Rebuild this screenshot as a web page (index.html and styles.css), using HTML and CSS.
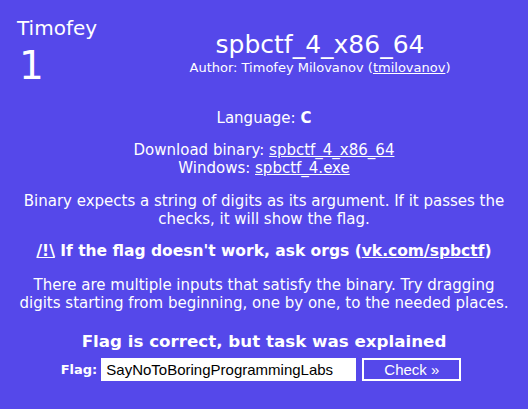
FILE: index.html
```html
<!DOCTYPE html>
<html>
<head>
<meta charset="utf-8">
<link rel="stylesheet" href="styles.css">
</head>
<body>
<div class="page">
  <header class="header">
    <div class="user">
      <div class="user-name">Timofey</div>
      <div class="user-score">1</div>
    </div>
    <div class="task-head">
      <div class="task-title">spbctf_4_x86_64</div>
      <div class="task-author">Author: Timofey Milovanov (<a href="#">tmilovanov</a>)</div>
    </div>
  </header>
  <main class="task-body">
    <p class="lang">Language: <b>C</b></p>
    <p class="downloads">Download binary: <a href="#">spbctf_4_x86_64</a><br>Windows: <a href="#">spbctf_4.exe</a></p>
    <p class="desc">Binary expects a string of digits as its argument. If it passes the checks, it will show the flag.</p>
    <p class="warn"><a href="#">/!\</a> If the flag doesn't work, ask orgs (<a href="#">vk.com/spbctf</a>)</p>
    <p class="hint">There are multiple inputs that satisfy the binary. Try dragging digits starting from beginning, one by one, to the needed places.</p>
    <p class="status">Flag is correct, but task was explained</p>
    <form class="flag-form">
      <label class="flag-label">Flag:</label>
      <input class="flag-input" type="text" value="SayNoToBoringProgrammingLabs">
      <button class="flag-btn" type="button">Check »</button>
    </form>
  </main>
</div>
</body>
</html>
```

FILE: styles.css
```css
html, body {
  margin: 0;
  padding: 0;
  background: #5548ea;
}
body {
  color: #ffffff;
  font-family: "DejaVu Sans", Verdana, sans-serif;
  font-size: 15px;
  width: 528px;
  height: 409px;
  overflow: hidden;
}
a {
  color: #ffffff;
  text-decoration: underline;
}
.header {
  display: flex;
  padding-top: 16px;
}
.user {
  width: 112px;
  padding-left: 17px;
  box-sizing: border-box;
}
.user-name {
  font-size: 20px;
  line-height: 24px;
}
.user-score {
  font-size: 39px;
  line-height: 46px;
  padding-left: 2px;
  margin-top: 3px;
}
.task-head {
  flex: 1;
  text-align: center;
  padding-top: 14px;
}
.task-title {
  font-size: 25px;
  line-height: 30px;
}
.task-author {
  font-size: 13px;
  line-height: 16px;
}
.task-body {
  text-align: center;
  padding: 0 14px;
}
.task-body p {
  margin: 0;
  line-height: 18px;
}
.lang {
  padding-top: 20px;
}
.downloads {
  margin-top: 14px !important;
}
.desc {
  margin-top: 15px !important;
}
.warn {
  font-weight: bold;
  font-size: 15.5px;
  margin-top: 14px !important;
}
.hint {
  margin-top: 16px !important;
}
.status {
  font-weight: bold;
  font-size: 16.7px;
  line-height: 20px !important;
  margin-top: 19px !important;
}
.flag-form {
  display: flex;
  justify-content: center;
  align-items: center;
  margin-top: 7px;
  padding-right: 6px;
}
.flag-label {
  font-weight: bold;
  font-size: 13px;
  margin-right: 4px;
}
.flag-input {
  width: 255px;
  height: 23px;
  box-sizing: border-box;
  border: none;
  background: #ffffff;
  padding: 0 5px;
  font-family: "Liberation Sans", Arial, sans-serif;
  font-size: 15px;
  color: #000000;
  margin: 0;
}
.flag-btn {
  width: 99px;
  height: 23px;
  box-sizing: border-box;
  border: 2px solid #ffffff;
  background: transparent;
  color: #ffffff;
  font-family: "Liberation Sans", Arial, sans-serif;
  font-size: 15px;
  padding: 0;
  margin: 0 0 0 6px;
}
```
